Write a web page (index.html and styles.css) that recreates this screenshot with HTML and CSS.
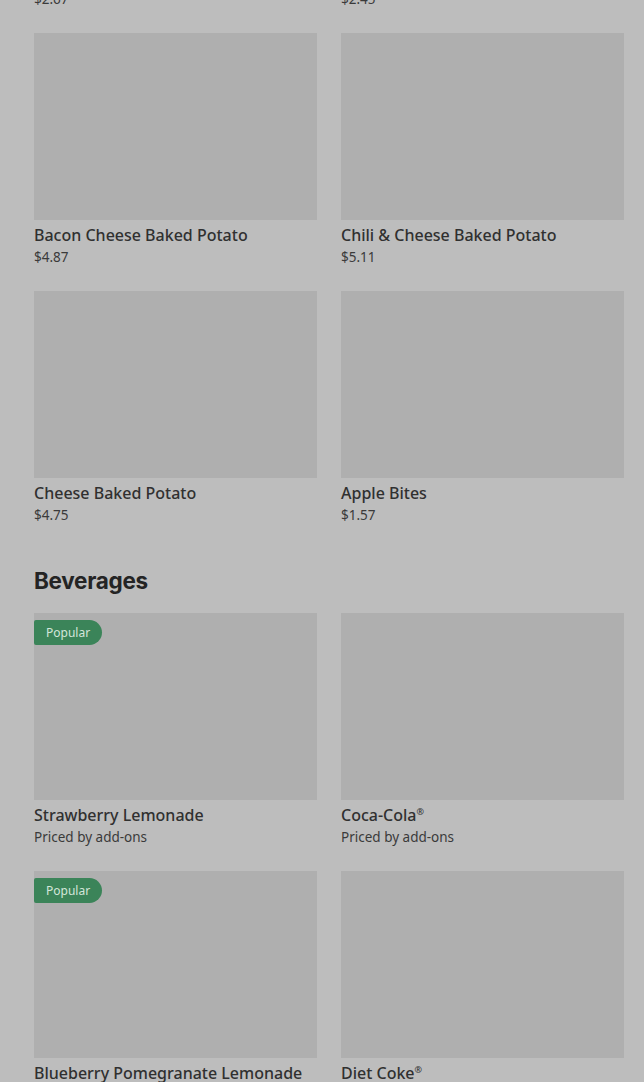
FILE: index.html
```html
<!DOCTYPE html>
<html lang="en">
<head>
  <meta charset="UTF-8">
  <meta name="viewport" content="width=device-width, initial-scale=1">
  <title>Menu</title>
  <link rel="stylesheet" href="styles.css">
</head>
<body>
  <div class="menu">
    <!-- Sides -->
    <section class="category">
      <div class="items">
        <div class="item">
          <div class="thumb"></div>
          <h3 class="name">Side Salad</h3>
          <p class="price">$2.67</p>
        </div>
        <div class="item">
          <div class="thumb"></div>
          <h3 class="name">Small Fries</h3>
          <p class="price">$2.45</p>
        </div>
        <div class="item">
          <div class="thumb"></div>
          <h3 class="name">Bacon Cheese Baked Potato</h3>
          <p class="price">$4.87</p>
        </div>
        <div class="item">
          <div class="thumb"></div>
          <h3 class="name">Chili &amp; Cheese Baked Potato</h3>
          <p class="price">$5.11</p>
        </div>
        <div class="item">
          <div class="thumb"></div>
          <h3 class="name">Cheese Baked Potato</h3>
          <p class="price">$4.75</p>
        </div>
        <div class="item">
          <div class="thumb"></div>
          <h3 class="name">Apple Bites</h3>
          <p class="price">$1.57</p>
        </div>
      </div>
    </section>

    <!-- Beverages -->
    <section class="category">
      <h2 class="category-title">Beverages</h2>
      <div class="items">
        <div class="item">
          <div class="thumb"><span class="badge">Popular</span></div>
          <h3 class="name">Strawberry Lemonade</h3>
          <p class="price">Priced by add-ons</p>
        </div>
        <div class="item">
          <div class="thumb"></div>
          <h3 class="name">Coca-Cola<sup>®</sup></h3>
          <p class="price">Priced by add-ons</p>
        </div>
        <div class="item">
          <div class="thumb"><span class="badge">Popular</span></div>
          <h3 class="name">Blueberry Pomegranate Lemonade</h3>
          <p class="price">Priced by add-ons</p>
        </div>
        <div class="item">
          <div class="thumb"></div>
          <h3 class="name">Diet Coke<sup>®</sup></h3>
          <p class="price">Priced by add-ons</p>
        </div>
      </div>
    </section>
  </div>
</body>
</html>
```

FILE: styles.css
```css
* {
  box-sizing: border-box;
  margin: 0;
  padding: 0;
}

body {
  font-family: "Noto Sans", "Liberation Sans", sans-serif;
  background-color: #bdbdbd;
  color: #2f2f2f;
  overflow: hidden;
}

/* Menu list */
.menu {
  margin-top: -225px;
  padding: 0 20px 0 34px;
}

.category {
  margin-bottom: 42px;
}

.category-title {
  font-family: Inter, "Liberation Sans", sans-serif;
  font-size: 22.5px;
  font-weight: 700;
  line-height: 28px;
  letter-spacing: -0.3px;
  color: #242424;
  margin-bottom: 18px;
}

.items {
  display: grid;
  grid-template-columns: 1fr 1fr;
  column-gap: 24px;
  row-gap: 24px;
}

.thumb {
  position: relative;
  height: 187px;
  background-color: #afafaf;
}

.badge {
  position: absolute;
  top: 7px;
  left: 0;
  height: 25px;
  line-height: 25px;
  padding: 0 12px;
  font-size: 12px;
  color: #d3e6d9;
  background-color: #3b8459;
  border-radius: 2px 13px 13px 2px;
}

.name {
  margin-top: 3px;
  font-size: 16px;
  font-weight: 500;
  line-height: 24px;
  color: #303030;
  white-space: nowrap;
}

.name sup {
  font-size: 9px;
  vertical-align: 6px;
  line-height: 0;
}

.price {
  font-size: 13.5px;
  line-height: 20px;
  color: #3a3a3a;
}
```
